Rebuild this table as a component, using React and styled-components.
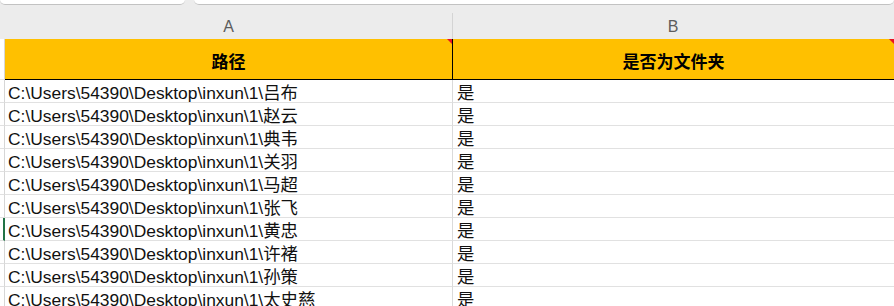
import React from 'react';
import styled, { createGlobalStyle } from 'styled-components';

const rows = ['吕布', '赵云', '典韦', '关羽', '马超', '张飞', '黄忠', '许褚', '孙策', '太史慈'];
const base = 'C:\\Users\\54390\\Desktop\\inxun\\1\\';

const App = () => {
  return (
    <>
      <GlobalStyle />
      <Sheet>
        <TopStrip>
          <Tab $w='185px' />
          <Tab $grow />
        </TopStrip>
        <ColumnBar>
          <Corner />
          <ColLetter>A</ColLetter>
          <ColLetter $last>B</ColLetter>
        </ColumnBar>
        <Grid>
          <RowHead />
          <HeadCell>
            路径
            <Flag />
          </HeadCell>
          <HeadCell $last>
            是否为文件夹
            <Flag />
          </HeadCell>
          {rows.map((name, i) => (
            <React.Fragment key={name}>
              <RowHead $active={i === 6} />
              <Cell>{base + name}</Cell>
              <Cell $last>是</Cell>
            </React.Fragment>
          ))}
        </Grid>
      </Sheet>
    </>
  );
};

export default App;

// STYLED CSS
const GlobalStyle = createGlobalStyle`
  body {
    margin: 0;
    background: #fff;
    overflow: hidden;
  }
`;

const Sheet = styled.div`
  width: 894px;
  height: 306px;
  overflow: hidden;
  font-family: 'Liberation Sans', 'Noto Sans CJK SC', sans-serif;
  background: #ececec;
`;

const TopStrip = styled.div`
  display: flex;
  gap: 9px;
  height: 5px;
`;

const Tab = styled.div`
  width: ${(p) => p.$w || 'auto'};
  flex: ${(p) => (p.$grow ? 1 : 'none')};
  background: #fff;
  border-bottom: 1px solid #c2c2c2;
  border-radius: 0 0 6px 6px;
`;

const ColumnBar = styled.div`
  display: grid;
  grid-template-columns: 5px 448px 441px;
  height: 34px;
  background: #ececec;
`;

const Corner = styled.div``;

const ColLetter = styled.div`
  margin-top: 8px;
  display: flex;
  align-items: center;
  justify-content: center;
  font-size: 16px;
  color: #5c5c5c;
  border-right: 1px solid ${(p) => (p.$last ? 'transparent' : '#d4d4d4')};
  padding-top: 2px;
`;

const Grid = styled.div`
  display: grid;
  grid-template-columns: 5px 448px 441px;
  grid-template-rows: 41px;
  grid-auto-rows: 23px;
  background: #fff;
`;

const RowHead = styled.div`
  background: #fff;
  box-sizing: border-box;
  border-bottom: 1px solid #e1e1e1;
  border-right: ${(p) => (p.$active ? '2px solid #217346' : '1px solid #d6d6d6')};
`;

const HeadCell = styled.div`
  position: relative;
  display: flex;
  align-items: center;
  justify-content: center;
  padding-top: 3px;
  box-sizing: border-box;
  background: #ffc000;
  border-bottom: 1px solid #000;
  border-right: ${(p) => (p.$last ? 'none' : '1px solid #000')};
  font-size: 17px;
  font-weight: bold;
  color: #000;
`;

const Flag = styled.span`
  position: absolute;
  top: 0;
  right: 0;
  width: 0;
  height: 0;
  border-top: 5px solid #e81123;
  border-left: 5px solid transparent;
`;

const Cell = styled.div`
  display: flex;
  align-items: center;
  box-sizing: border-box;
  padding-left: ${(p) => (p.$last ? '4px' : '3px')};
  border-bottom: 1px solid #e1e1e1;
  border-right: ${(p) => (p.$last ? 'none' : '1px solid #dadada')};
  font-size: 17.4px;
  color: #111;
  white-space: nowrap;
  overflow: hidden;
`;
